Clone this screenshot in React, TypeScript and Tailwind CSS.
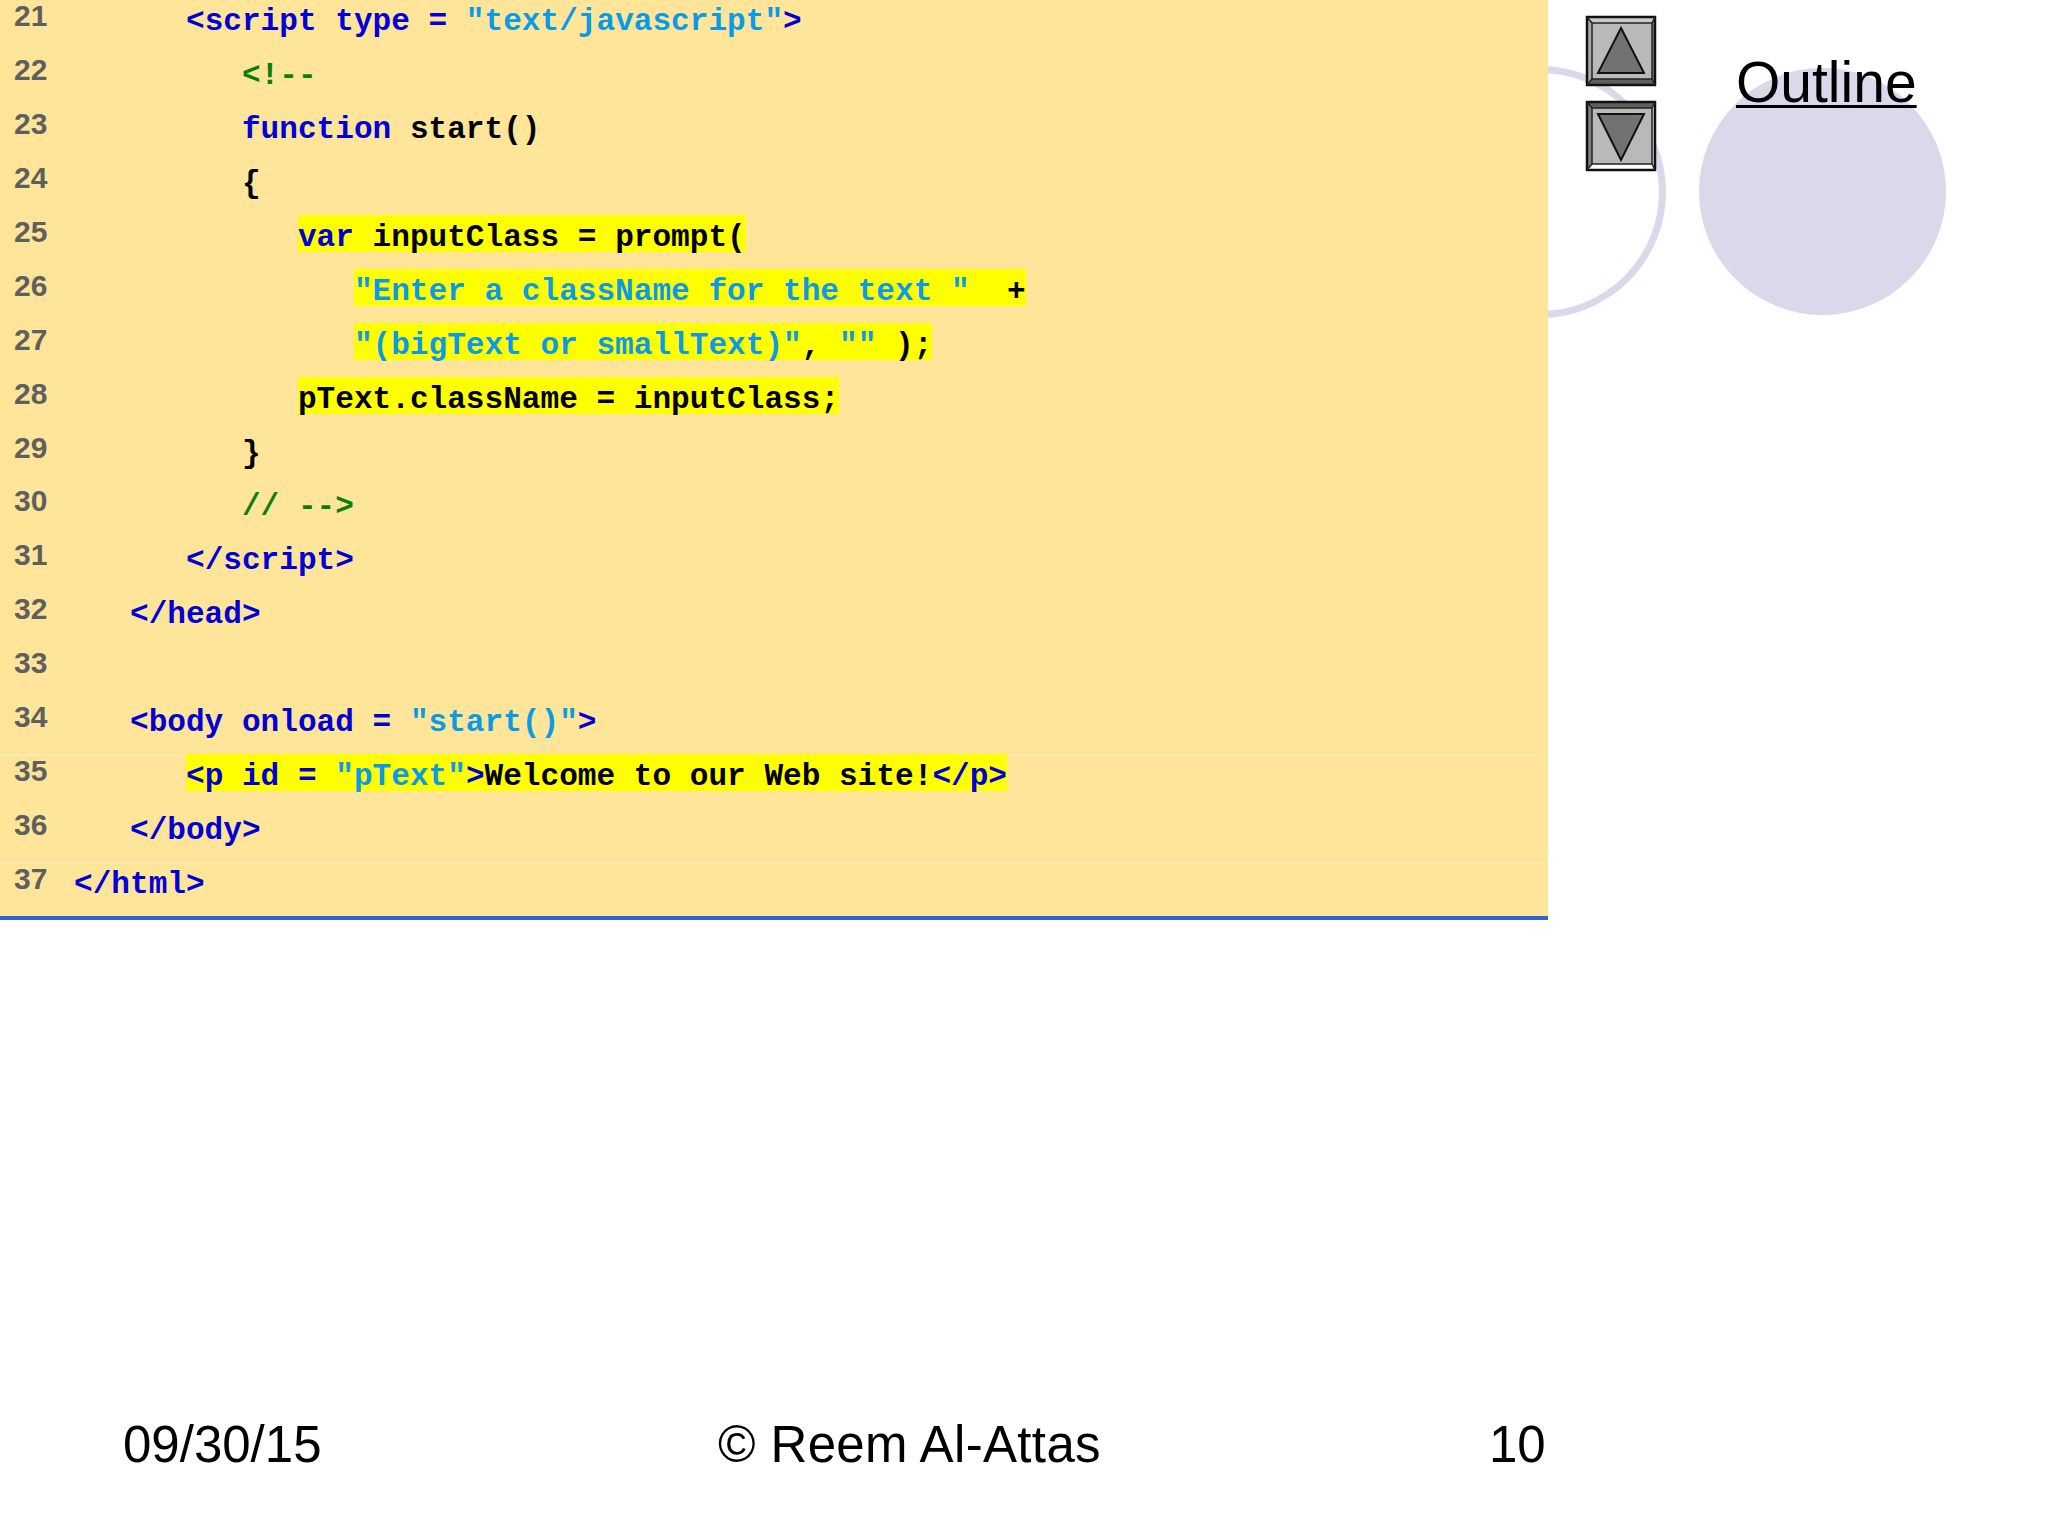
import React from 'react'

type Seg = [string, 'b' | 's' | 'k' | 'g']

const colors = {
    b: 'text-[#0000d6]',
    s: 'text-[#0a9be6]',
    k: 'text-black',
    g: 'text-[#0a800a]',
}

const lines: { n: number; pad: string; hl?: boolean; segs: Seg[] }[] = [
    { n: 21, pad: '      ', segs: [['<script type = ', 'b'], ['"text/javascript"', 's'], ['>', 'b']] },
    { n: 22, pad: '         ', segs: [['<!--', 'g']] },
    { n: 23, pad: '         ', segs: [['function', 'b'], [' start()', 'k']] },
    { n: 24, pad: '         ', segs: [['{', 'k']] },
    { n: 25, pad: '            ', hl: true, segs: [['var', 'b'], [' inputClass = prompt(', 'k']] },
    { n: 26, pad: '               ', hl: true, segs: [['"Enter a className for the text "', 's'], ['  +', 'k']] },
    { n: 27, pad: '               ', hl: true, segs: [['"(bigText or smallText)"', 's'], [', ', 'k'], ['""', 's'], [' );', 'k']] },
    { n: 28, pad: '            ', hl: true, segs: [['pText.className = inputClass;', 'k']] },
    { n: 29, pad: '         ', segs: [['}', 'k']] },
    { n: 30, pad: '         ', segs: [['// -->', 'g']] },
    { n: 31, pad: '      ', segs: [['</script>', 'b']] },
    { n: 32, pad: '   ', segs: [['</head>', 'b']] },
    { n: 33, pad: '', segs: [] },
    { n: 34, pad: '   ', segs: [['<body onload = ', 'b'], ['"start()"', 's'], ['>', 'b']] },
    { n: 35, pad: '      ', hl: true, segs: [['<p id = ', 'b'], ['"pText"', 's'], ['>', 'b'], ['Welcome to our Web site!', 'k'], ['</p>', 'b']] },
    { n: 36, pad: '   ', segs: [['</body>', 'b']] },
    { n: 37, pad: '', segs: [['</html>', 'b']] },
]

const CodeRow = ({ line }: any) => {
    return (
        <div className="relative flex h-[53.9px] items-center">
            {/* faint scan line left in the slide, sits a little under the row top */}
            {(line.n === 35 || line.n === 37) && <div className="absolute left-0 right-0 top-[7px] h-px bg-[#ffefb8]" />}
            <div className="relative w-[74px] shrink-0 pl-[14px] -mt-[9px] font-['Liberation_Sans'] text-[30px] leading-none font-bold text-[#5f5f5f]">
                {line.n}
            </div>
            <div className="relative -top-[3px] whitespace-pre font-['Liberation_Mono'] text-[31.1px] leading-[37px] font-bold">
                <span>{line.pad}</span>
                <span className={line.hl ? 'inline-block h-[37px] bg-[#ffff00]' : 'inline-block h-[37px]'}>
                    <span className="relative top-[4px]">
                        {line.segs.map((s: Seg, i: number) => (
                            <span key={i} className={colors[s[1]]}>{s[0]}</span>
                        ))}
                    </span>
                </span>
            </div>
        </div>
    )
}

// bevelled slide-nav button, lit from the top when "up"
const NavButton = ({ up }: { up: boolean }) => {
    const dark = '#5e605e'
    return (
        <svg width="72" height="72" viewBox="0 0 72 72" className="block">
            <rect x="2" y="2" width="68" height="68" fill="#b8bab7" />
            <polygon points="2,2 70,2 67,8 7,8" fill={up ? '#c9cbc8' : dark} />
            <polygon points="2,70 70,70 67,64 7,64" fill={up ? dark : '#ffffff'} />
            <polygon points="2,2 7,8 7,64 2,70" fill={up ? '#a8aaa7' : '#7d7f7d'} />
            <polygon points="70,2 67,8 67,64 70,70" fill={up ? '#7d7f7d' : '#d5d6d4'} />
            <rect x="2" y="2" width="68" height="68" fill="none" stroke="#111" strokeWidth="2.5" />
            <rect x="7" y="8" width="60" height="56" fill="none" stroke="#222" strokeWidth="1.5" />
            <path d="M2 2L7 8M70 2L67 8M2 70L7 64M70 70L67 64" stroke="#222" strokeWidth="1.5" />
            <polygon
                points={up ? '36,13 13,58 59,58' : '13,14 59,14 36,60'}
                fill="#717371"
                stroke="#111"
                strokeWidth="2"
            />
        </svg>
    )
}

export default function App() {
    return (
        <div className="relative flex h-[1536px] w-[2048px] flex-col overflow-hidden bg-white font-['Liberation_Sans'] text-black">
            {/* background circles from the slide master */}
            <div className="absolute left-[1414px] top-[66px] h-[252px] w-[252px] rounded-full border-[7px] border-[#dad8ea]" />
            <div className="absolute left-[1699px] top-[68px] h-[247px] w-[247px] rounded-full bg-[#dad8ea]" />

            <div className="relative flex">
                <div className="h-[920px] w-[1548px] shrink-0 overflow-hidden border-b-[4px] border-[#2f62d9] bg-[#ffe599]">
                    <div className="-mt-[6px]">
                        {lines.map((line) => (
                            <CodeRow key={line.n} line={line} />
                        ))}
                    </div>
                </div>
                <div className="flex items-start">
                    <div className="ml-[37px] mt-[15px] flex flex-col gap-[13px]">
                        <NavButton up={true} />
                        <NavButton up={false} />
                    </div>
                    <div className="ml-[79px] mt-[47px] text-[57px] leading-[70px] underline decoration-[3px] underline-offset-[3px]">Outline</div>
                </div>
            </div>

            <div className="relative mt-[494px] flex w-[1548px] text-[51px] leading-[62px]">
                <div className="ml-[123px] w-[595px]">09/30/15</div>
                <div className="w-[771px] tracking-[0.35px]">© Reem Al-Attas</div>
                <div>10</div>
            </div>
        </div>
    )
}
